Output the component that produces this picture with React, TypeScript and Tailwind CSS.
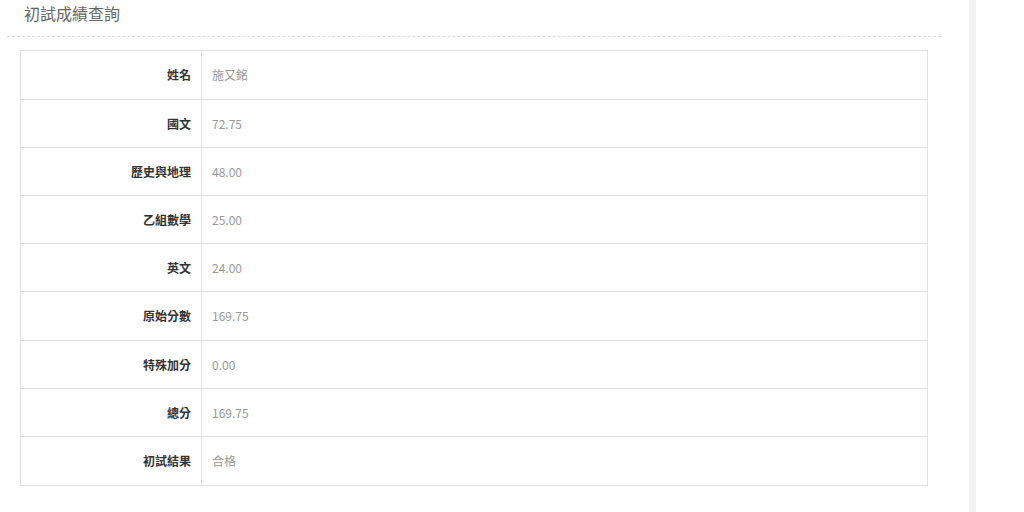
export default function App() {
  const rows = [
    { label: "姓名", value: "施又銘", h: "h-[48px]" },
    { label: "國文", value: "72.75", h: "h-[48px]" },
    { label: "歷史與地理", value: "48.00", h: "h-[48px]" },
    { label: "乙組數學", value: "25.00", h: "h-[48px]" },
    { label: "英文", value: "24.00", h: "h-[48px]" },
    { label: "原始分數", value: "169.75", h: "h-[49px]" },
    { label: "特殊加分", value: "0.00", h: "h-[48px]" },
    { label: "總分", value: "169.75", h: "h-[48px]" },
    { label: "初試結果", value: "合格", h: "h-[49px]" },
  ];

  return (
    <div className="w-[1024px] h-[512px] bg-white overflow-hidden flex font-['Noto_Sans_CJK_TC','Noto_Sans',sans-serif]">
      <div className="w-[969px] h-full bg-white flex flex-col border-r-[7px] border-r-[#f2f2f2] box-content">
        <div className="h-[36px] pl-6 pt-[1px]">
          <h1 className="text-[16px] leading-[24px] text-[#666]">初試成績查詢</h1>
        </div>
        <div className="ml-[7px] w-[934px] border-t border-dashed border-[#dddddd]" />
        <div className="ml-[20px] mt-[13px] w-[908px] border border-[#e2e2e2]">
          {rows.map((row, i) => (
            <div
              key={row.label}
              className={`flex ${row.h} ${i > 0 ? "border-t border-[#e2e2e2]" : ""}`}
            >
              <div className="w-[181px] border-r border-[#e2e2e2] flex items-center justify-end pr-[10px] text-[12px] font-bold text-[#333]">
                {row.label}
              </div>
              <div className="flex-1 flex items-center pl-[10px] text-[12px] text-[#999]">
                {row.value}
              </div>
            </div>
          ))}
        </div>
      </div>
      <div className="flex-1 bg-white" />
    </div>
  );
}
